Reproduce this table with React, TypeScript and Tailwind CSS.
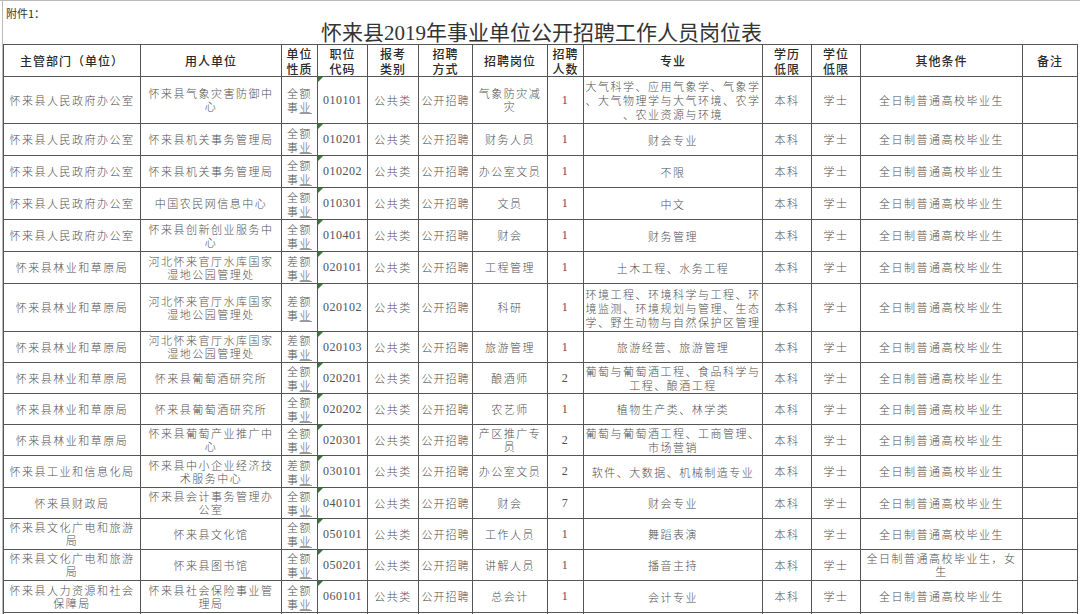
import React from 'react';

/**
 * 怀来县2019年事业单位公开招聘工作人员岗位表
 */

type Row = {
  dept: string;
  unit: string;
  nature: string;
  code: string;
  pos: string;
  num: string;
  major: string[];
  other?: string;
  h: number;
};

const rows: Row[] = [
  { dept: '怀来县人民政府办公室', unit: '怀来县气象灾害防御中心', nature: '全额', code: '010101', pos: '气象防灾减灾', num: '1', major: ['大气科学、应用气象学、气象学', '、大气物理学与大气环境、农学', '、农业资源与环境'], h: 47 },
  { dept: '怀来县人民政府办公室', unit: '怀来县机关事务管理局', nature: '全额', code: '010201', pos: '财务人员', num: '1', major: ['财会专业'], h: 32 },
  { dept: '怀来县人民政府办公室', unit: '怀来县机关事务管理局', nature: '全额', code: '010202', pos: '办公室文员', num: '1', major: ['不限'], h: 32 },
  { dept: '怀来县人民政府办公室', unit: '中国农民网信息中心', nature: '全额', code: '010301', pos: '文员', num: '1', major: ['中文'], h: 32 },
  { dept: '怀来县人民政府办公室', unit: '怀来县创新创业服务中心', nature: '全额', code: '010401', pos: '财会', num: '1', major: ['财务管理'], h: 32 },
  { dept: '怀来县林业和草原局', unit: '河北怀来官厅水库国家湿地公园管理处', nature: '差额', code: '020101', pos: '工程管理', num: '1', major: ['土木工程、水务工程'], h: 32 },
  { dept: '怀来县林业和草原局', unit: '河北怀来官厅水库国家湿地公园管理处', nature: '差额', code: '020102', pos: '科研', num: '1', major: ['环境工程、环境科学与工程、环', '境监测、环境规划与管理、生态', '学、野生动物与自然保护区管理'], h: 48 },
  { dept: '怀来县林业和草原局', unit: '河北怀来官厅水库国家湿地公园管理处', nature: '差额', code: '020103', pos: '旅游管理', num: '1', major: ['旅游经营、旅游管理'], h: 31 },
  { dept: '怀来县林业和草原局', unit: '怀来县葡萄酒研究所', nature: '全额', code: '020201', pos: '酿酒师', num: '2', major: ['葡萄与葡萄酒工程、食品科学与', '工程、酿酒工程'], h: 31 },
  { dept: '怀来县林业和草原局', unit: '怀来县葡萄酒研究所', nature: '全额', code: '020202', pos: '农艺师', num: '1', major: ['植物生产类、林学类'], h: 31 },
  { dept: '怀来县林业和草原局', unit: '怀来县葡萄产业推广中心', nature: '全额', code: '020301', pos: '产区推广专员', num: '2', major: ['葡萄与葡萄酒工程、工商管理、', '市场营销'], h: 31 },
  { dept: '怀来县工业和信息化局', unit: '怀来县中小企业经济技术服务中心', nature: '差额', code: '030101', pos: '办公室文员', num: '2', major: ['软件、大数据、机械制造专业'], h: 32 },
  { dept: '怀来县财政局', unit: '怀来县会计事务管理办公室', nature: '全额', code: '040101', pos: '财会', num: '7', major: ['财会专业'], h: 31 },
  { dept: '怀来县文化广电和旅游局', unit: '怀来县文化馆', nature: '全额', code: '050101', pos: '工作人员', num: '1', major: ['舞蹈表演'], h: 31 },
  { dept: '怀来县文化广电和旅游局', unit: '怀来县图书馆', nature: '全额', code: '050201', pos: '讲解人员', num: '1', major: ['播音主持'], other: '全日制普通高校毕业生，女生', h: 31 },
  { dept: '怀来县人力资源和社会保障局', unit: '怀来县社会保险事业管理局', nature: '全额', code: '060101', pos: '总会计', num: '1', major: ['会计专业'], h: 32 },
];

const widths = [137, 141, 36, 50, 51, 54, 75, 36, 179, 49, 49, 162, 55];

const th = 'border border-[#555] text-center align-middle px-[2px] text-[12px] leading-[15px] font-medium text-[#2a2a2a] tracking-[1px]';
const td = 'border border-[#555] text-center align-middle px-[3px] text-[11px] leading-[13px] font-light text-[#505050] tracking-[1.5px]';
const serif = { fontFamily: '"Liberation Serif", "Noto Sans CJK SC", serif' };

export default function App() {
  return (
    <div
      className="w-[1080px] h-[614px] overflow-hidden bg-white border-t border-[#bbb]"
      style={{ fontFamily: '"Noto Sans CJK SC", "Noto Sans", sans-serif' }}
    >
      <div className="ml-[2px] border-l border-[#bbb]">
        <div className="h-[43px] relative">
          <div className="pl-[3px] pt-[5px] text-[11px] leading-[14px] text-[#333]">附件1：</div>
          <div
            className="absolute left-0 right-0 top-[19px] text-center text-[21px] leading-[26px] text-[#333]"
            style={serif}
          >
            怀来县2019年事业单位公开招聘工作人员岗位表
          </div>
        </div>

        <table className="table-fixed border-collapse w-[1075px]">
          <colgroup>
            {widths.map((w, i) => (
              <col key={i} style={{ width: w }} />
            ))}
          </colgroup>
          <thead>
            <tr className="h-[32px]">
              <th className={th}>主管部门（单位）</th>
              <th className={th}>用人单位</th>
              <th className={th}>单位<br />性质</th>
              <th className={th}>职位<br />代码</th>
              <th className={th}>报考<br />类别</th>
              <th className={th}>招聘<br />方式</th>
              <th className={th}>招聘岗位</th>
              <th className={th}>招聘<br />人数</th>
              <th className={th}>专业</th>
              <th className={th}>学历<br />低限</th>
              <th className={th}>学位<br />低限</th>
              <th className={th}>其他条件</th>
              <th className={th}>备注</th>
            </tr>
          </thead>
          <tbody>
            {rows.map((r) => (
              <tr key={r.code} style={{ height: r.h }}>
                <td className={td}>{r.dept}</td>
                <td className={td}>{r.unit}</td>
                <td className={`${td} !px-0 !leading-[14px]`}>
                  <div>{r.nature}</div>
                  <div>
                    事<span className="underline decoration-[#999]">业</span>
                  </div>
                </td>
                <td className={`${td} relative !tracking-[0.5px] !text-[12px]`} style={serif}>
                  <span className="absolute left-0 top-0 w-0 h-0 border-t-[5px] border-r-[5px] border-t-[#2e7d32] border-r-transparent" />
                  {r.code}
                </td>
                <td className={td}>公共类</td>
                <td className={`${td} !px-0 !tracking-[1px] whitespace-nowrap`}>公开招聘</td>
                <td className={td}>{r.pos}</td>
                <td className={`${td} !text-[12px]`} style={serif}>{r.num}</td>
                <td className={`${td} !px-[1px] !leading-[14px]`}>
                  {r.major.map((m, i) => (
                    <div key={i}>{m}</div>
                  ))}
                </td>
                <td className={td}>本科</td>
                <td className={td}>学士</td>
                <td className={td}>{r.other ?? '全日制普通高校毕业生'}</td>
                <td className={td}></td>
              </tr>
            ))}
            <tr className="h-[31px]">
              {widths.map((_, i) => (
                <td key={i} className={td}></td>
              ))}
            </tr>
          </tbody>
        </table>
      </div>
    </div>
  );
}
